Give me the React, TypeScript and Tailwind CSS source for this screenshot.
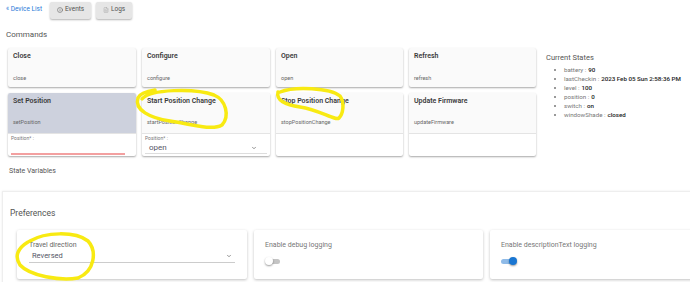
import React from "react";
import { Info, FileText, ChevronDown } from "lucide-react";

const Card = ({ title, sub, gray }: { title: string; sub: string; gray?: boolean }) => (
  <div
    className={`flex flex-col justify-between h-[39px] px-[5px] pt-[5px] pb-[6px] rounded-[2px] shadow-[0_1px_2px_rgba(0,0,0,0.35)] ${
      gray ? "bg-[#cdd1dd]" : "bg-[#fafafa]"
    }`}
  >
    <div className="text-[7px] font-semibold text-[#3a3a3a] leading-none">{title}</div>
    <div className="text-[5.5px] text-[#666] leading-none">{sub}</div>
  </div>
);

const Card2 = ({
  title,
  sub,
  gray,
  children,
}: {
  title: string;
  sub: string;
  gray?: boolean;
  children?: React.ReactNode;
}) => (
  <div className="flex flex-col rounded-[2px] shadow-[0_1px_2px_rgba(0,0,0,0.35)] bg-white overflow-hidden">
    <div
      className={`flex flex-col justify-between h-[40px] px-[5px] pt-[5px] pb-[8px] ${
        gray ? "bg-[#cdd1dd]" : "bg-[#fafafa]"
      }`}
    >
      <div className="text-[7px] font-semibold text-[#3a3a3a] leading-none">{title}</div>
      <div className="text-[5.5px] text-[#666] leading-none">{sub}</div>
    </div>
    <div className="h-[23px] border-t border-[#e4e4e4] px-[3px] pt-[2px]">{children}</div>
  </div>
);

export default function App() {
  return (
    <div
      className="relative w-[690px] h-[282px] overflow-hidden bg-white text-[#444]"
      style={{ fontFamily: "Roboto, 'Noto Sans', sans-serif" }}
    >
      {/* header */}
      <div className="flex items-center h-[19px] pl-[6px] gap-[8px] pt-[1px]">
        <span className="text-[6.5px] text-[#2a7ad8]">« Device List</span>
        <div className="flex gap-[5px]">
          <div className="flex items-center gap-[2px] h-[17px] w-[41px] justify-center bg-[#e6e6e6] rounded-[2px] shadow-[0_1px_2px_rgba(0,0,0,0.3)] text-[6.5px] text-[#555]">
            <Info size={6} strokeWidth={2} />
            <span>Events</span>
          </div>
          <div className="flex items-center gap-[2px] h-[17px] w-[36px] justify-center bg-[#e6e6e6] rounded-[2px] shadow-[0_1px_2px_rgba(0,0,0,0.3)] text-[6.5px] text-[#555]">
            <FileText size={6} strokeWidth={1.5} className="text-[#999]" />
            <span>Logs</span>
          </div>
        </div>
      </div>

      <div className="pl-[6px] mt-[11px] text-[8px] text-[#555] leading-[9px]">Commands</div>

      <div className="flex mt-[9px] pl-[8px]">
        <div className="grid grid-cols-[128px_128px_127px_127px] gap-x-[6px] gap-y-[6px] w-[530px] items-start">
          <Card title="Close" sub="close" />
          <Card title="Configure" sub="configure" />
          <Card title="Open" sub="open" />
          <Card title="Refresh" sub="refresh" />
          <Card2 title="Set Position" sub="setPosition" gray>
            <div className="text-[5px] text-[#777] leading-none">Position* :</div>
            <div className="mt-[12px] h-[1.5px] w-[114px] bg-[#f3a0a0]" />
          </Card2>
          <Card2 title="Start Position Change" sub="startPositionChange">
            <div className="text-[5px] text-[#777] leading-none">Position* :</div>
            <div className="flex items-center justify-between pl-[4px] pr-[10px] mt-[2px] border-b border-[#ddd] h-[11px]">
              <span className="text-[8px] text-[#556]">open</span>
              <ChevronDown size={6} strokeWidth={2.5} className="text-[#555]" />
            </div>
          </Card2>
          <Card2 title="Stop Position Change" sub="stopPositionChange" />
          <Card2 title="Update Firmware" sub="updateFirmware" />
        </div>
        <div className="pl-[8px] pt-[6px]">
          <div className="text-[7.5px] text-[#555] leading-none">Current States</div>
          <ul className="mt-[4px] pl-[8px] text-[6.2px] leading-[9px] text-[#777]">
            {[
              ["battery", "90"],
              ["lastCheckin", "2023 Feb 05 Sun 2:58:36 PM"],
              ["level", "100"],
              ["position", "0"],
              ["switch", "on"],
              ["windowShade", "closed"],
            ].map(([k, v]) => (
              <li key={k} className="flex items-center">
                <span className="w-[2px] h-[2px] rounded-full bg-[#777] mr-[8px]" />
                <span>{k} : </span>
                <span className="text-[#222] font-medium ml-[2px]">{v}</span>
              </li>
            ))}
          </ul>
        </div>
      </div>

      <div className="pl-[9px] mt-[12px] text-[7px] text-[#555] leading-none">State Variables</div>

      <div className="ml-[2px] mt-[16px] w-[760px] h-[120px] border-t border-l border-[#eee] shadow-[0_0_2px_rgba(0,0,0,0.08)] pl-[14px] pt-[17px]">
        <div className="-ml-[7px] text-[8.5px] text-[#555] leading-none">Preferences</div>
        <div className="flex gap-[7px] mt-[12px]">
          <div className="w-[230px] h-[49px] bg-white rounded-[2px] shadow-[0_1px_3px_rgba(0,0,0,0.25)] px-[12px] pt-[12px]">
            <div className="text-[7px] text-[#666] leading-none">Travel direction</div>
            <div className="flex items-center justify-between border-b border-[#ccc] h-[12px] mt-[2px] pl-[3px] pr-[3px]">
              <span className="text-[7.5px] text-[#556]">Reversed</span>
              <ChevronDown size={6} strokeWidth={2.5} className="text-[#555]" />
            </div>
          </div>
          <div className="w-[229px] h-[49px] bg-white rounded-[2px] shadow-[0_1px_3px_rgba(0,0,0,0.25)] px-[11px] pt-[12px]">
            <div className="text-[7px] text-[#777] leading-none">Enable debug logging</div>
            <div className="relative mt-[8px] w-[16px] h-[8px]">
              <div className="absolute left-[2px] top-[2px] w-[13px] h-[5px] rounded-full bg-[#c4c4c4]" />
              <div className="absolute left-0 top-0 w-[8px] h-[8px] rounded-full bg-white shadow-[0_1px_2px_rgba(0,0,0,0.4)]" />
            </div>
          </div>
          <div className="w-[230px] h-[49px] bg-white rounded-[2px] shadow-[0_1px_3px_rgba(0,0,0,0.25)] px-[11px] pt-[12px]">
            <div className="text-[7px] text-[#777] leading-none">Enable descriptionText logging</div>
            <div className="relative mt-[8px] w-[16px] h-[8px]">
              <div className="absolute left-0 top-[2px] w-[13px] h-[5px] rounded-full bg-[#8fbbe8]" />
              <div className="absolute left-[8px] top-0 w-[8px] h-[8px] rounded-full bg-[#1976d2] shadow-[0_1px_2px_rgba(0,0,0,0.4)]" />
            </div>
          </div>
        </div>
      </div>

      {/* yellow annotations */}
      <svg className="absolute inset-0 pointer-events-none" width="690" height="282" viewBox="0 0 690 282">
        <g fill="none" stroke="#f8ea12" strokeWidth="3.5" strokeLinecap="round">
          <path d="M142 99 C 150 89, 195 88, 214 95 C 226 100, 230 116, 222 125 C 212 131, 190 124, 170 121 C 150 118, 134 110, 138 98 C 140 93, 148 91, 155 90" />
          <path d="M280 92 C 295 86, 330 88, 340 96 C 345 103, 343 114, 339 118 C 335 121, 320 110, 300 107 C 285 105, 276 100, 278 92" />
          <path d="M30 241 C 45 232, 75 231, 88 241 C 97 251, 95 271, 78 278 C 60 281, 30 276, 20 265 C 14 256, 18 248, 28 242" />
        </g>
      </svg>
    </div>
  );
}
